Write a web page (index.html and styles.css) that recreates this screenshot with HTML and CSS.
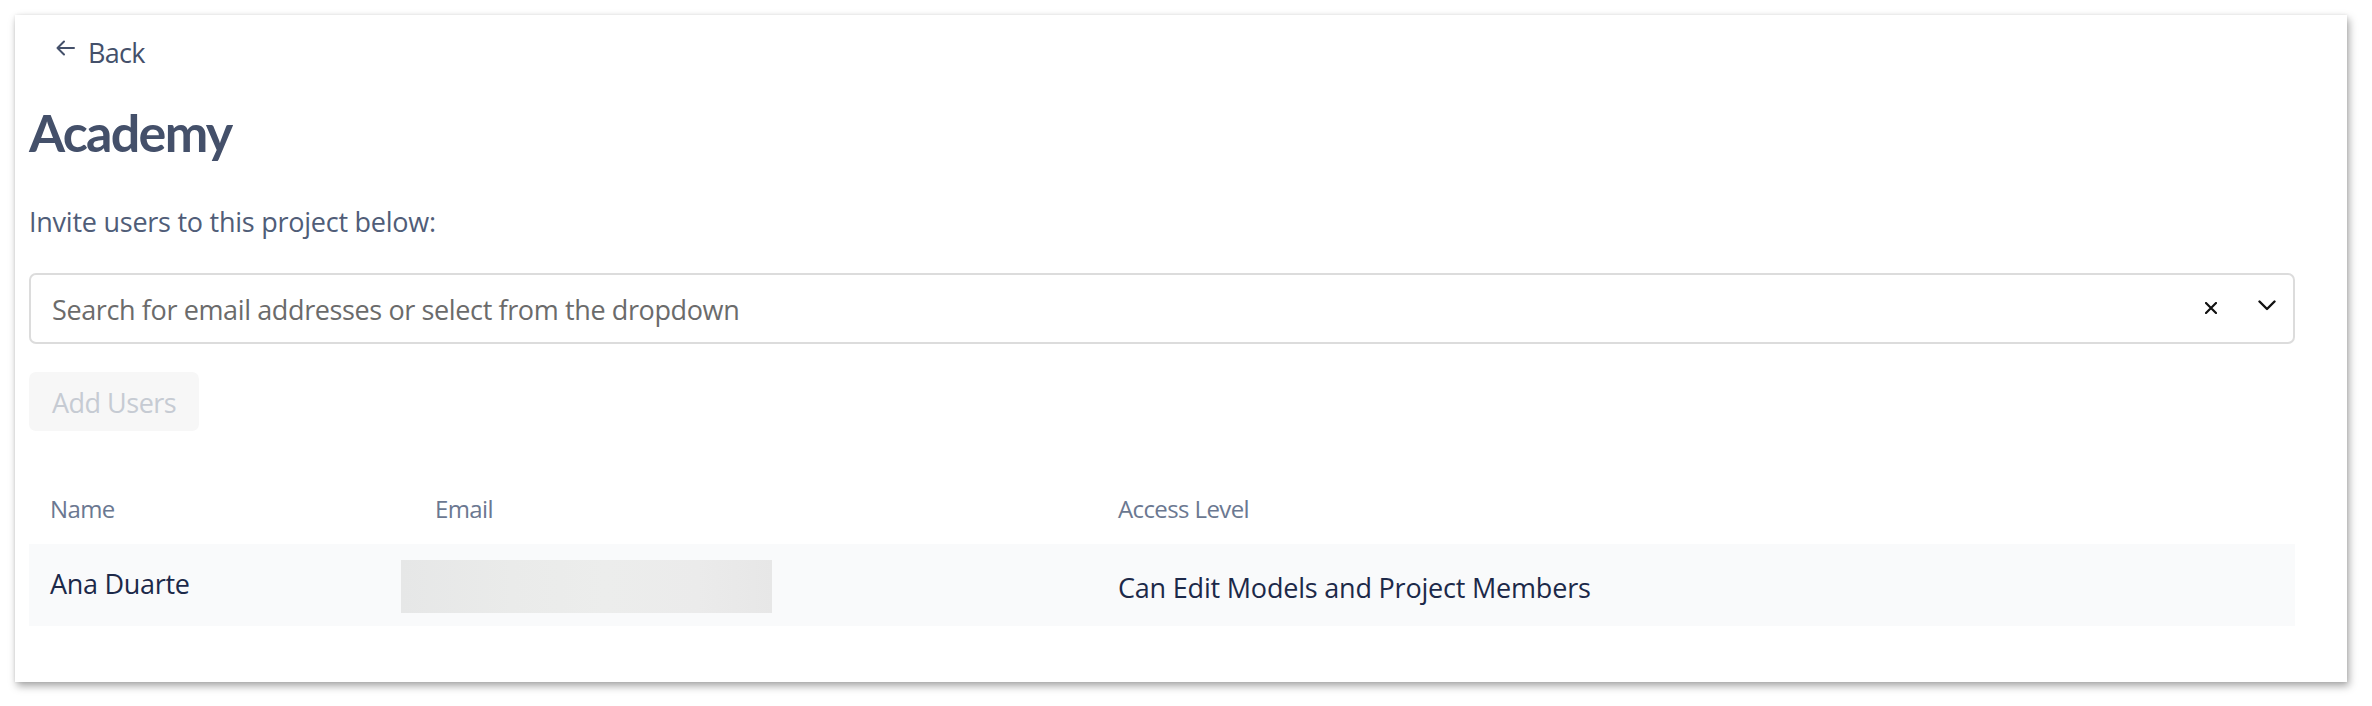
FILE: index.html
```html
<!DOCTYPE html>
<html lang="en">
<head>
<meta charset="utf-8">
<title>Academy</title>
<link rel="stylesheet" href="styles.css">
</head>
<body>
<div class="card">
  <a class="back" href="#">
    <svg class="back-icon" width="20" height="18" viewBox="0 0 20 18" aria-hidden="true"><path d="M19 9H2.5M9 2.5L2.5 9L9 15.5" fill="none" stroke="currentColor" stroke-width="2" stroke-linecap="round" stroke-linejoin="round"/></svg>
    <span>Back</span>
  </a>
  <h1 class="title">Academy</h1>
  <p class="intro">Invite users to this project below:</p>
  <div class="select">
    <span class="placeholder">Search for email addresses or select from the dropdown</span>
    <div class="select-icons">
      <svg class="clear-icon" width="12" height="12" viewBox="0 0 12 12" aria-hidden="true"><path d="M1 1L11 11M11 1L1 11" fill="none" stroke="#111" stroke-width="2.2" stroke-linecap="round"/></svg>
      <svg class="chevron-icon" width="18" height="11" viewBox="0 0 18 11" aria-hidden="true"><path d="M1.5 1.5L9 9L16.5 1.5" fill="none" stroke="#111" stroke-width="2.4" stroke-linecap="round" stroke-linejoin="round"/></svg>
    </div>
  </div>
  <button class="add-btn" type="button" disabled>Add Users</button>
  <div class="table">
    <div class="thead">
      <div class="th">Name</div>
      <div class="th">Email</div>
      <div class="th">Access Level</div>
    </div>
    <div class="tr">
      <div class="td name">Ana Duarte</div>
      <div class="td email"><div class="redacted"></div></div>
      <div class="td access">Can Edit Models and Project Members</div>
    </div>
  </div>
</div>
</body>
</html>
```
FILE: styles.css
```css
* { box-sizing: border-box; }
html, body { margin: 0; padding: 0; background: #ffffff; }
body {
  font-family: "Open Sans", "Noto Sans", sans-serif;
  width: 2372px;
  height: 706px;
  overflow: hidden;
}
.card {
  margin: 15px 0 0 15px;
  width: 2332px;
  height: 667px;
  background: #fff;
  padding: 18px 52px 0 14px;
  box-shadow: 2px 4px 8px rgba(0,0,0,0.35), 0 0 3px rgba(0,0,0,0.08);
}
.back {
  display: flex;
  align-items: flex-start;
  height: 40px;
  margin-left: 26px;
  color: #44506a;
  text-decoration: none;
  font-size: 27px;
  line-height: 40px;
  letter-spacing: -0.7px;
}
.back-icon { margin-top: 6px; margin-right: 13px; }
.title {
  margin: 27px 0 0 0;
  font-family: "Lato", "Open Sans", sans-serif;
  font-size: 52px;
  line-height: 64px;
  font-weight: 700;
  color: #44506a;
  letter-spacing: -1.7px;
}
.intro {
  margin: 40px 0 0 0;
  font-size: 27px;
  line-height: 36px;
  color: #505d78;
  letter-spacing: -0.25px;
}
.select {
  margin-top: 33px;
  height: 71px;
  border: 2px solid #dcdcdc;
  border-radius: 7px;
  display: flex;
  align-items: center;
  padding: 0 17px 0 21px;
}
.placeholder {
  flex: 1;
  font-size: 27px;
  line-height: 36px;
  color: #6b6b6b;
  letter-spacing: -0.38px;
  padding-top: 2px;
}
.select-icons {
  display: flex;
  align-items: center;
  gap: 41px;
  margin-bottom: 6px;
}
.clear-icon { margin-top: 5px; }
.add-btn {
  display: block;
  margin-top: 28px;
  width: 170px;
  height: 59px;
  border: none;
  border-radius: 7px;
  background: #f7f7f7;
  font-family: inherit;
  font-size: 27px;
  line-height: 36px;
  color: #c6cbd3;
  text-align: left;
  padding: 2px 0 0 23px;
  letter-spacing: -0.5px;
}
.table { margin-top: 61px; }
.thead, .tr {
  display: grid;
  grid-template-columns: 385px 683px 1fr;
}
.th {
  padding: 0 0 18px 21px;
  font-size: 24px;
  line-height: 34px;
  color: #6b7891;
  letter-spacing: -0.6px;
}
.tr {
  height: 82px;
  background: #f9fafb;
  align-items: start;
}
.td {
  padding-left: 21px;
  font-size: 27px;
  line-height: 36px;
  color: #1c2949;
  letter-spacing: -0.2px;
}
.name { padding-top: 22px; letter-spacing: -0.3px; }
.email { padding: 16px 0 0 0; }
.redacted {
  margin-left: -13px;
  width: 371px;
  height: 53px;
  background: linear-gradient(90deg, #e6e7e7 0%, #eaebea 30%, #ecedec 55%, #ebebeb 80%, #e7e7e7 100%);
}
.access { padding-top: 26px; }
```
